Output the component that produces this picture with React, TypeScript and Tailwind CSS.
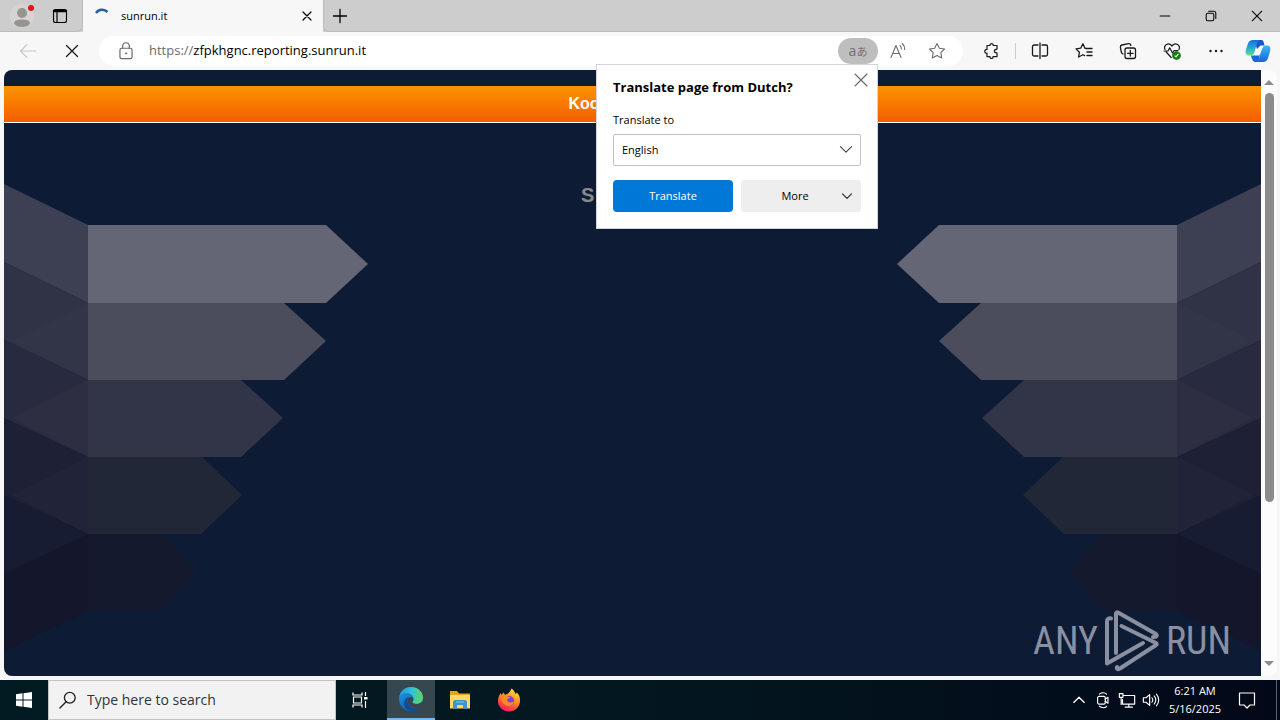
import type { ReactNode } from "react";

interface IconProps {
  size?: number;
  className?: string;
  children: ReactNode;
}

const Icon = ({ size = 20, className = "", children }: IconProps) => (
  <svg
    width={size}
    height={size}
    viewBox="0 0 20 20"
    fill="none"
    stroke="currentColor"
    strokeWidth="1.1"
    strokeLinecap="round"
    strokeLinejoin="round"
    aria-hidden="true"
    className={`shrink-0 ${className}`}
  >
    {children}
  </svg>
);

interface IconButtonProps {
  label: string;
  className?: string;
  children: ReactNode;
}

const IconButton = ({ label, className = "", children }: IconButtonProps) => (
  <button
    type="button"
    aria-label={label}
    className={`flex shrink-0 items-center justify-center ${className}`}
  >
    {children}
  </button>
);

const TitleBar = () => (
  <header className="flex h-8 shrink-0 bg-[#cdcdcd] text-black">
    <div className="flex w-[83px] shrink-0 items-center rounded-br-md border-r border-b border-[#bcbcbc]">
      <IconButton label="Profile" className="ml-2 h-7 w-7">
        <svg width="28" height="28" viewBox="0 0 28 28">
          <circle cx="14" cy="14" r="12" fill="#d6d4d2" />
          <circle cx="14" cy="11" r="5" fill="#979391" />
          <path
            d="M6 21.500C6 18.800 9 17.500 14 17.500s8 1.300 8 4C20.500 24 17.500 25 14 25s-6.500-1-8-3.500z"
            fill="#979391"
          />
          <circle cx="23" cy="6" r="3" fill="#e3111c" />
        </svg>
      </IconButton>
      <IconButton label="Tab actions" className="ml-2.5 h-7 w-7">
        <Icon size={20}>
          <rect x="3.500" y="3.500" width="13" height="13" rx="2" />
          <path d="M4 5h12" strokeWidth="2.400" />
          <path d="M7 6v10.500" strokeWidth="1.200" />
        </Icon>
      </IconButton>
    </div>
    <div className="flex w-60 shrink-0 items-center bg-[#f7f7f7] pr-1 pl-2.5">
      <svg width="18" height="18" viewBox="0 0 18 18" fill="none">
        <path
          d="M3 6A7.500 7.500 0 0 1 14.500 5"
          stroke="#245f9c"
          strokeWidth="2.500"
        />
      </svg>
      <span className="ml-2.5 grow text-[11px]">sunrun.it</span>
      <IconButton label="Close tab" className="h-6 w-6">
        <Icon size={16}>
          <path d="M5 5l10 10M15 5L5 15" strokeWidth="1.500" />
        </Icon>
      </IconButton>
    </div>
    <div className="flex grow items-center rounded-bl-md border-b border-l border-[#bcbcbc]">
      <IconButton label="New tab" className="h-7 w-8">
        <Icon>
          <path d="M10 3.500v13M3.500 10h13" strokeWidth="1.300" />
        </Icon>
      </IconButton>
      <div className="grow" />
      <IconButton label="Minimize" className="h-8 w-[46px]">
        <Icon size={16}>
          <path d="M4 10h12" strokeWidth="1.300" />
        </Icon>
      </IconButton>
      <IconButton label="Restore" className="h-8 w-[46px]">
        <Icon size={16}>
          <rect x="4" y="6.500" width="9.500" height="9.500" rx="2" strokeWidth="1.300" />
          <path d="M7 4h6.500A2.500 2.500 0 0 1 16 6.500V13" strokeWidth="1.300" />
        </Icon>
      </IconButton>
      <IconButton label="Close" className="h-8 w-[46px]">
        <Icon size={16}>
          <path d="M4 4l12 12M16 4L4 16" strokeWidth="1.300" />
        </Icon>
      </IconButton>
    </div>
  </header>
);

const TranslatePopup = () => (
  <section
    aria-label="Translate"
    className="absolute top-full right-0 z-10 w-[282px] border border-[#d2d4dc] bg-white px-4 pt-3 pb-4 text-[11px] text-black"
  >
    <IconButton label="Dismiss" className="absolute top-[5px] right-1.5 h-5 w-5 text-[#666666]">
      <Icon>
        <path d="M4 4l12 12M16 4L4 16" />
      </Icon>
    </IconButton>
    <h2 className="text-[13px] leading-5 font-bold">
      Translate page from Dutch?
    </h2>
    <label htmlFor="language" className="mt-[13px] block leading-5">
      Translate to
    </label>
    <div className="relative mt-1">
      <select
        id="language"
        defaultValue="en"
        className="h-8 w-full appearance-none rounded-xs border border-[#c0c0c0] bg-white px-2"
      >
        <option value="en">English</option>
      </select>
      <Icon size={14} className="pointer-events-none absolute top-2 right-2 text-[#444444]">
        <path d="M2 6.500l8 8 8-8" strokeWidth="1.600" />
      </Icon>
    </div>
    <div className="mt-3.5 grid grid-cols-2 gap-2">
      <button type="button" className="h-8 rounded-sm bg-[#0078d7] text-white">
        Translate
      </button>
      <button type="button" className="flex h-8 items-center rounded-sm bg-[#eeeeee] px-2">
        <span className="grow">More</span>
        <Icon size={12} className="text-[#333333]">
          <path d="M2.500 6.500l7.500 7.500 7.500-7.500" strokeWidth="2.200" />
        </Icon>
      </button>
    </div>
  </section>
);

const CopilotLogo = () => (
  <svg width="26" height="26" viewBox="0 0 26 26" aria-hidden="true">
    <defs>
      <linearGradient id="cp1" x1="0" y1="0" x2="0" y2="1">
        <stop offset="0" stopColor="#1a6fd8" />
        <stop offset="0.450" stopColor="#20a3dc" />
        <stop offset="1" stopColor="#5fe08a" />
      </linearGradient>
      <linearGradient id="cp2" x1="0" y1="0" x2="0" y2="1">
        <stop offset="0" stopColor="#37b9f5" />
        <stop offset="1" stopColor="#1666dc" />
      </linearGradient>
    </defs>
    <path d="M9 2h7c2.500 0 2.800 2 3.500 5.500h-4L12 11z" fill="#1a56c4" />
    <path
      d="M8 2h6.500c-2 1-2.600 3.500-3.400 6.500L9.500 14c-.8 2.600-2 3.500-4 3.500H4c-3 0-4-2.500-3-6l1.800-5.500C3.700 3.300 5.500 2 8 2z"
      fill="url(#cp1)"
    />
    <path d="M6 17.500h4.500l4-4V24h-4c-2.500 0-3.500-2.500-4.500-6.500z" fill="#1769d9" />
    <path
      d="M18 24h-6.500c2-1 2.600-3.500 3.400-6.500l1.600-6c.8-2.600 2-4 4-4H22c3 0 4 2.500 3 6l-1.800 6C22.300 22.700 20.500 24 18 24z"
      fill="url(#cp2)"
    />
    <path d="M15 8h3.500L14 17.500h-3.500z" fill="#f7f7f7" />
  </svg>
);

const Toolbar = () => (
  <div className="flex h-[38px] shrink-0 items-center bg-[#f7f7f7] text-[#1a1a1a]">
    <IconButton label="Back" className="ml-3 h-8 w-8 text-[#c8c8c8]">
      <Icon>
        <path d="M18 10H2.500M9 3.500L2.500 10 9 16.500" />
      </Icon>
    </IconButton>
    <IconButton label="Stop" className="ml-3 h-8 w-8">
      <Icon>
        <path d="M4.500 4.500l11 11M15.500 4.500l-11 11" strokeWidth="1.300" />
      </Icon>
    </IconButton>
    <div className="ml-[11px] flex h-[30px] grow items-center rounded-full bg-white pr-2 pl-4 text-[#6b6b6b]">
      <Icon size={22}>
        <rect x="4.500" y="7.500" width="11" height="9.500" rx="1.500" />
        <path d="M7 7.500V5.500a3 3 0 0 1 6 0v2" />
        <circle cx="10" cy="12.200" r="0.700" fill="currentColor" strokeWidth="0.500" />
      </Icon>
      <label htmlFor="address" className="ml-3 text-[13px]">
        https://
      </label>
      <input
        id="address"
        type="text"
        defaultValue="zfpkhgnc.reporting.sunrun.it"
        className="min-w-0 grow bg-transparent text-[13px] text-black outline-none"
      />
      <div className="relative">
        <button
          type="button"
          aria-label="Show translate options"
          className="flex h-[26px] w-10 items-center justify-center rounded-full bg-[#bebebe] text-[#707070]"
        >
          <span className="text-sm leading-4">a</span>
          <span className="font-['Noto_Sans_CJK_JP',sans-serif] text-[11px] leading-4">あ</span>
        </button>
        <TranslatePopup />
      </div>
      <IconButton label="Read aloud" className="h-7 w-10">
        <Icon>
          <path d="M3 16.500L8 4.500l5 12M4.800 12.500h6.400" />
          <path d="M12 4.500c1 .9 1.400 2 1.400 3.500M14.300 2.500c1.600 1.600 2.400 3.400 2.400 6" />
        </Icon>
      </IconButton>
      <IconButton label="Add to favorites" className="h-7 w-[37px]">
        <Icon>
          <path d="M10 2.500l2.300 4.700 5.200.8-3.700 3.700.9 5.200L10 14.500l-4.700 2.400.9-5.200L2.500 8l5.200-.8z" />
        </Icon>
      </IconButton>
    </div>
    <IconButton label="Extensions" className="ml-3 h-8 w-8">
      <Icon>
        <path d="M6 4.500h3c-.4-2.500 3.600-2.500 3.200 0h3.800v3.600c-1.600.2-2.600 1-2.600 1.900s1 1.900 2.600 1.900v3.800h-4c.3 2.300-3.300 2.300-3 0H6v-3.500c-3 .4-3-4.100 0-3.700z" strokeWidth="1.200" />
      </Icon>
    </IconButton>
    <div className="mx-2 h-4 w-px bg-[#cccccc]" />
    <div className="flex items-center gap-3">
      <IconButton label="Split screen" className="h-8 w-8">
        <Icon>
          <path d="M8 4H4a1.500 1.500 0 0 0-1.500 1.500v8A1.500 1.500 0 0 0 4 15h4M12 4h4a1.500 1.500 0 0 1 1.500 1.500v8A1.500 1.500 0 0 1 16 15h-4M10 2v15.500" strokeWidth="1.300" />
        </Icon>
      </IconButton>
      <IconButton label="Favorites" className="h-8 w-8">
        <Icon>
          <path d="M11.500 7.500h6.500M13 11h5M13 14.500h5" strokeWidth="1.400" />
          <path d="M11 7.300L8.900 2.800 6.700 7.200l-4.700.7 3.400 3.300-.8 4.800 4.300-2.300 1.700.9" strokeWidth="1.300" />
        </Icon>
      </IconButton>
      <IconButton label="Collections" className="h-8 w-8">
        <Icon>
          <rect x="7" y="7" width="10.500" height="10.500" rx="2" strokeWidth="1.300" />
          <path d="M12.300 9.500v5.600M9.500 12.300h5.600M5 13c-1-.3-1.500-1-1.700-2L2.400 6.300c-.2-1.200.4-2 1.500-2.300L10.500 2.600c1.200-.2 2 .4 2.300 1.500v.5" strokeWidth="1.300" />
        </Icon>
      </IconButton>
      <IconButton label="Browser essentials" className="h-8 w-8">
        <Icon>
          <path d="M3 8.500C1.200 4 6.600.8 10 5c3.400-4.200 8.800-1 7 3.500M4.200 11l5 5.500M2 10h4l1.700-3.200L10.500 12l1.700-2.500h3.800" strokeWidth="1.200" />
          <circle cx="14.500" cy="14.500" r="3.800" fill="#107c10" stroke="#107c10" />
          <path d="M12.900 14.800l1.100 1 2.200-2.600" stroke="white" />
        </Icon>
      </IconButton>
      <IconButton label="Settings and more" className="h-8 w-8">
        <Icon>
          <g fill="currentColor" stroke="none">
            <circle cx="4.500" cy="10" r="1.200" />
            <circle cx="10" cy="10" r="1.200" />
            <circle cx="15.500" cy="10" r="1.200" />
          </g>
        </Icon>
      </IconButton>
    </div>
    <IconButton label="Copilot" className="mr-2 ml-3 h-8 w-7">
      <CopilotLogo />
    </IconButton>
  </div>
);

const Ribbons = ({ className = "" }: { className?: string }) => (
  <svg
    width="364"
    height="468"
    viewBox="0 0 364 468"
    aria-hidden="true"
    className={`absolute top-[114px] ${className}`}
  >
    <path d="M0 0L84 41V119L0 78z" fill="#3d3f53" />
    <path d="M0 78L84 119V196L0 156z" fill="#303246" />
    <path d="M84 119V196L8 157z" fill="#323448" />
    <path d="M0 156L84 196V273L0 234z" fill="#282a3f" />
    <path d="M84 196V273L8 234z" fill="#2d2e42" />
    <path d="M0 234L84 273V350L0 311z" fill="#1e2036" />
    <path d="M84 273V350L8 311z" fill="#212438" />
    <path d="M0 311L84 350L0 390z" fill="#181c33" />
    <path d="M0 390L84 350V427L0 467z" fill="#14172c" />
    <path d="M84 41H322L364 80L322 119H84z" fill="#656675" />
    <path d="M84 119H280L322 157L280 196H84z" fill="#4b4d5d" />
    <path d="M84 196H237L279 234L237 273H84z" fill="#323448" />
    <path d="M84 273H198L238 311L197 350H84z" fill="#222738" />
    <path d="M84 350H158L192 388L158 427H84z" fill="#15192d" />
  </svg>
);

const Watermark = () => (
  <div className="absolute right-[30px] bottom-1 flex items-center font-['Roboto_Condensed','Liberation_Sans_Narrow','Liberation_Sans',sans-serif] text-[38px] font-normal text-[#8a8fa1]">
    <span>ANY</span>
    <svg
      width="56"
      height="62"
      viewBox="0 0 56 62"
      fill="none"
      stroke="currentColor"
      strokeWidth="4"
      strokeLinecap="round"
      strokeLinejoin="round"
      className="mx-1.5"
      aria-hidden="true"
    >
      <path d="M7 8.500C5 8 3 9 3 11V53.500L39 33" />
      <path d="M12 43V3.500C12 2.500 13 2 14 2.500L52 24C54 25.500 52 27.500 49 27" />
      <path d="M17.500 16L52 33C53 33.500 53 34.500 52 35L16 58.500C14 60 12 58.500 13 57" />
    </svg>
    <span>RUN</span>
  </div>
);

const Scrollbar = () => (
  <div className="flex w-4 shrink-0 flex-col items-center rounded-r-lg bg-[#fcfcfc] text-[#8b8b8b]">
    <svg width="10" height="23" viewBox="0 0 10 23" aria-hidden="true">
      <path d="M0 15L5 10L10 15z" fill="currentColor" />
    </svg>
    <div className="h-[409px] w-[9px] rounded-full bg-[#8b8b8b]" />
    <div className="grow" />
    <svg width="10" height="16" viewBox="0 0 10 16" aria-hidden="true">
      <path d="M0 1L5 6L10 1z" fill="currentColor" />
    </svg>
  </div>
);

const PageView = () => (
  <div className="flex min-h-0 grow bg-[#f7f7f7] pr-[3px] pb-1 pl-1">
    <main className="relative grow overflow-hidden rounded-l-lg bg-[#0e1b35] pt-4 font-['Liberation_Sans',Arial,sans-serif] font-bold">
      <Ribbons className="left-0" />
      <Ribbons className="right-0 -scale-x-100" />
      <div className="h-[37px] border-b border-white bg-linear-to-b from-[#fa9300] to-[#f45c00] text-white">
        <p className="mx-auto w-32 leading-9">Koo</p>
      </div>
      <p className="mx-auto mt-[60px] w-[103px] text-xl leading-6 text-[#8a8a8a]">
        S
      </p>
      <Watermark />
    </main>
    <Scrollbar />
  </div>
);

const EdgeLogo = () => (
  <svg width="26" height="26" viewBox="0 0 26 26" aria-hidden="true">
    <defs>
      <linearGradient id="edgeTop" x1="0" y1="0.500" x2="1" y2="0.600">
        <stop offset="0" stopColor="#2196dc" />
        <stop offset="0.500" stopColor="#33c2d8" />
        <stop offset="1" stopColor="#62d957" />
      </linearGradient>
      <linearGradient id="edgeBody" x1="0" y1="0" x2="0.600" y2="1">
        <stop offset="0" stopColor="#1f9be0" />
        <stop offset="1" stopColor="#0d5fb8" />
      </linearGradient>
    </defs>
    <circle cx="13" cy="13" r="12" fill="url(#edgeBody)" />
    <path
      d="M1.200 11C2.500 4.500 7.500 1 13 1c7 0 12 5 12 10.500 0 4-3 6.500-6.500 6.500-3 0-4.500-1.200-4.200-2.200.2-.7 1.200-1.200 1.200-3.200C15.500 9.500 12 7 8.500 7S2.500 9 1.200 11z"
      fill="url(#edgeTop)"
    />
    <path
      d="M9.500 14c-.5 4.500 3.500 8 8 8 2.500 0 4.300-.8 5.500-1.600C21 23.500 17.500 25 14 25c-5 0-8-3.500-8-7.500 0-3.500 2-6 4.500-6.800-.6.900-.9 2-1 3.300z"
      fill="#124d94"
    />
    <path
      d="M15.300 14.500c-.3.700-1 .8-1 1.500 0 1 1.500 2 4.200 2 2.500 0 4-.7 5.300-2 .8 1.700 1 3-.3 4.400-2 1.600-4 1.900-6 1.600-4.500-.5-8-3.500-8-7.500 0-3 2.500-4 4-3.500 1.500.4 2.300 2 1.800 3.500z"
      fill="#37474f"
    />
  </svg>
);

const FolderLogo = () => (
  <svg width="22" height="20" viewBox="0 0 22 20" aria-hidden="true">
    <path d="M1 1h7l2 2.500h11V18H1z" fill="#e8a31c" />
    <path d="M1 5h20v13.500H1z" fill="#ffd766" />
    <path d="M4 19v-6.500A2.500 2.500 0 0 1 6.500 10h9a2.500 2.500 0 0 1 2.500 2.500V19h-4v-4H8v4z" fill="#3e93cf" />
    <path d="M7 12h8" stroke="#7cc3ee" />
  </svg>
);

const FirefoxLogo = () => (
  <svg width="24" height="24" viewBox="0 0 24 24" aria-hidden="true">
    <defs>
      <linearGradient id="fox" x1="0.800" y1="0" x2="0.300" y2="1">
        <stop offset="0" stopColor="#ffe53c" />
        <stop offset="0.400" stopColor="#ff9a1e" />
        <stop offset="0.750" stopColor="#ff4a3a" />
        <stop offset="1" stopColor="#f0196e" />
      </linearGradient>
    </defs>
    <path
      d="M14.500.5c2.500 1.700 3.500 3.500 3.800 5.500L20 4.500c2.300 2.500 3 5 3 8C23 19 18 23.500 12 23.500S1 19 1 13c0-4 1.500-6.500 3-8l.7 2L6.500 4.500 8 6.800c3-.3 5-2.800 6.500-6.300z"
      fill="url(#fox)"
    />
    <circle cx="12" cy="13" r="5.200" fill="#7a43d6" />
    <path
      d="M3 10c2-3 6-3.500 8-1.500l2.300.4c-.2 1-1.800 1.600-3 2.100-.5 2.500 1.500 3.800 3.200 3.500 1.500-.3 2.500-1 3.500-.3-.8 2.600-3 4-5.500 3.800C7.500 17.800 5 14 3 10z"
      fill="#ff8a22"
    />
  </svg>
);

const Taskbar = () => (
  <footer className="flex h-10 shrink-0 bg-linear-to-r from-[#021a22] via-[#031720] to-[#020818] text-white">
    <IconButton label="Start" className="h-10 w-12">
      <svg width="16" height="16" viewBox="0 0 16 16" fill="white">
        <path d="M0 2.200L6.500 1.300V7.500H0zM7.500 1.200L16 0v7.500H7.500zM0 8.500h6.500v6.200L0 13.800zM7.500 8.500H16V16l-8.500-1.200z" />
      </svg>
    </IconButton>
    <label
      htmlFor="search"
      className="flex h-10 w-72 shrink-0 items-center border border-[#c4c4c4] bg-[#f2f2f2] pl-2.5 text-[#222222]"
    >
      <Icon size={18}>
        <circle cx="12" cy="7.500" r="6" strokeWidth="1.500" />
        <path d="M8 12l-7 7" strokeWidth="1.500" />
      </Icon>
      <input
        id="search"
        type="search"
        aria-label="Search"
        placeholder="Type here to search"
        className="ml-2.5 min-w-0 grow bg-transparent text-sm placeholder-[#333333] outline-none"
      />
    </label>
    <IconButton label="Task view" className="h-10 w-12">
      <svg width="18" height="18" viewBox="0 0 18 18" fill="none" stroke="white" strokeWidth="1.200">
        <path d="M2 1.500v2.500h9V1.500M2 16.500V14h9v2.500M2.500 6v6h8V6zM14.500 1v4M14.500 10v7" />
        <path d="M13 6h3.500v2.500H13z" fill="white" stroke="none" />
      </svg>
    </IconButton>
    <IconButton
      label="Microsoft Edge"
      className="ml-[3px] h-10 w-12 border-b-2 border-[#76b9ed] bg-[#37474f]"
    >
      <EdgeLogo />
    </IconButton>
    <IconButton label="File Explorer" className="ml-px h-10 w-12">
      <FolderLogo />
    </IconButton>
    <IconButton label="Firefox" className="ml-px h-10 w-12">
      <FirefoxLogo />
    </IconButton>
    <div className="grow" />
    <div className="flex items-center">
      <IconButton label="Show hidden icons" className="h-10 w-6">
        <Icon size={14}>
          <path d="M2.500 13.500L10 6l7.500 7.500" strokeWidth="1.800" />
        </Icon>
      </IconButton>
      <IconButton label="Meet Now" className="h-10 w-6">
        <Icon size={18}>
          <rect x="4" y="6" width="8.500" height="8.500" rx="1.500" strokeWidth="1.300" />
          <path d="M12.500 9l3-2v6.500l-3-2M6 3.500c2.500-2 6-2 8 0M6 17c2.500 2 6 2 8 0" strokeWidth="1.300" />
        </Icon>
      </IconButton>
      <IconButton label="Network" className="h-10 w-6">
        <Icon size={18}>
          <path d="M6.500 5H18.500v9.500H5V9.500M12 14.500v3.500M8 18h8M1.500 3v4h4V3zM3.500 7v8" strokeWidth="1.300" />
        </Icon>
      </IconButton>
      <IconButton label="Volume" className="h-10 w-6">
        <Icon size={18}>
          <path d="M1.500 7.500h3L8.500 4v12l-4-3.500h-3z" strokeWidth="1.300" />
          <path d="M11 7.500c1.200 1.500 1.200 3.500 0 5M13.500 5.500c2.200 2.700 2.200 6.300 0 9M16 3.500c3.200 4 3.200 9 0 13" strokeWidth="1.200" />
        </Icon>
      </IconButton>
    </div>
    <button type="button" className="w-16 text-[11px] leading-[18px]">
      <span className="block">6:21 AM</span>
      <span className="block">5/16/2025</span>
    </button>
    <IconButton label="Notifications" className="mr-[9px] h-10 w-10">
      <Icon size={20}>
        <path d="M2.500 3h15v12H13l-3 3-3-3H2.500z" strokeWidth="1.200" />
      </Icon>
    </IconButton>
    <div className="w-1 border-l border-[#59606c]" />
  </footer>
);

const App = () => (
  <div className="flex h-screen flex-col overflow-hidden font-['Open_Sans','Noto_Sans',sans-serif]">
    <TitleBar />
    <Toolbar />
    <PageView />
    <Taskbar />
  </div>
);

export default App;
